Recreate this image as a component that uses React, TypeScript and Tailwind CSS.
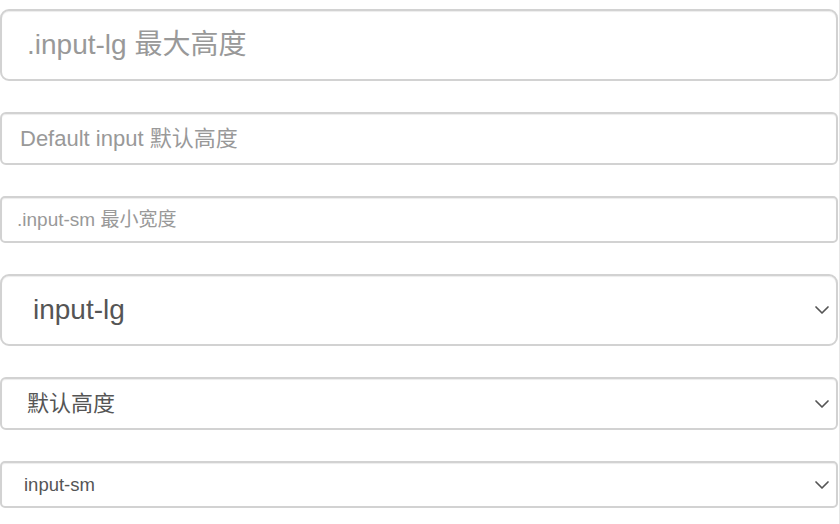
import { ChevronDown } from "lucide-react";

const font = "font-['Liberation_Sans','Noto_Sans_CJK_SC',sans-serif]";

function TextInput({ size, placeholder }: { size: "lg" | "md" | "sm"; placeholder: string }) {
  const cls = {
    lg: "h-[72px] px-[25px] text-[28px] rounded-[9px]",
    md: "h-[53px] px-[18px] text-[22px] rounded-[6px]",
    sm: "h-[47px] px-[15px] text-[19px] rounded-[5px]",
  }[size];
  return (
    <input
      type="text"
      placeholder={placeholder}
      className={`${font} ${cls} w-full border-2 border-[#d2d2d2] bg-white text-[#555] placeholder:text-[#999] shadow-[inset_0_1px_1px_rgba(0,0,0,0.075)] outline-none`}
    />
  );
}

function Select({ size, value }: { size: "lg" | "md" | "sm"; value: string }) {
  const cls = {
    lg: "h-[72px] pl-[31px] text-[28px] rounded-[9px]",
    md: "h-[53px] pl-[25px] text-[22px] rounded-[6px]",
    sm: "h-[47px] pl-[22px] text-[18.5px] rounded-[5px]",
  }[size];
  return (
    <div className="relative w-full">
      <select
        defaultValue={value}
        className={`${font} ${cls} w-full appearance-none border-2 border-[#d2d2d2] bg-white pr-10 text-[#555] shadow-[inset_0_1px_1px_rgba(0,0,0,0.075)] outline-none`}
      >
        <option>{value}</option>
      </select>
      <ChevronDown
        size={24}
        strokeWidth={1.7}
        className="pointer-events-none absolute right-[4px] top-1/2 -translate-y-1/2 text-[#555]"
      />
    </div>
  );
}

export default function App() {
  return (
    <div className="flex min-h-[524px] w-[840px] bg-white">
      <div className="flex w-[838px] flex-col gap-[31px] pt-[9px]">
        <TextInput size="lg" placeholder=".input-lg 最大高度" />
        <TextInput size="md" placeholder="Default input 默认高度" />
        <TextInput size="sm" placeholder=".input-sm 最小宽度" />
        <Select size="lg" value="input-lg" />
        <Select size="md" value="默认高度" />
        <Select size="sm" value="input-sm" />
      </div>
      <div className="ml-[1px] w-[1px] bg-[#e6e6e6]" />
    </div>
  );
}
